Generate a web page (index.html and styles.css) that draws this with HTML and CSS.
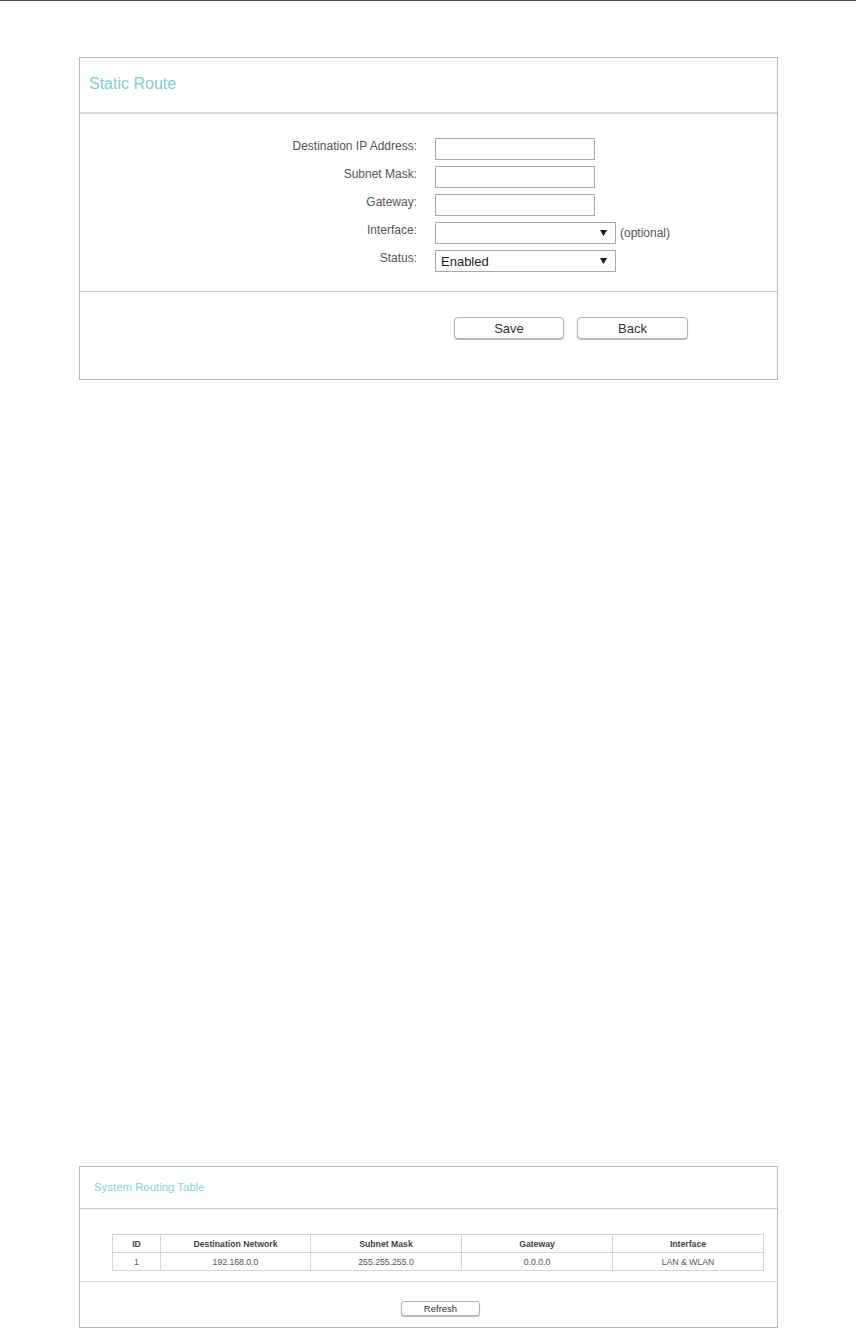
FILE: index.html
```html
<!DOCTYPE html>
<html lang="en">
<head>
<meta charset="utf-8">
<title>Static Route</title>
<link rel="stylesheet" href="styles.css">
</head>
<body>
<div class="topbar"></div>

<section class="panel panel-static">
  <div class="panel-head">
    <h2 class="title">Static Route</h2>
  </div>
  <div class="form">
    <label class="lbl">Destination IP Address:</label>
    <div class="field"><input class="txt" type="text"></div>

    <label class="lbl">Subnet Mask:</label>
    <div class="field"><input class="txt" type="text"></div>

    <label class="lbl">Gateway:</label>
    <div class="field"><input class="txt" type="text"></div>

    <label class="lbl">Interface:</label>
    <div class="field">
      <div class="select"><span class="select-val"></span><svg class="arrow" width="7" height="6" viewBox="0 0 7 6"><path d="M0 0H7L3.5 6Z" fill="#1a1a1a"/></svg></div>
      <span class="hint">(optional)</span>
    </div>

    <label class="lbl">Status:</label>
    <div class="field">
      <div class="select"><span class="select-val">Enabled</span><svg class="arrow" width="7" height="6" viewBox="0 0 7 6"><path d="M0 0H7L3.5 6Z" fill="#1a1a1a"/></svg></div>
    </div>
  </div>
  <div class="actions">
    <button class="btn btn-save" type="button">Save</button>
    <button class="btn btn-back" type="button">Back</button>
  </div>
</section>

<section class="panel panel-table">
  <div class="panel-head small">
    <h2 class="title small">System Routing Table</h2>
  </div>
  <div class="table-wrap">
    <table class="rt">
      <colgroup>
        <col class="c-id"><col class="c-net"><col class="c-mask"><col class="c-gw"><col class="c-if">
      </colgroup>
      <thead>
        <tr><th>ID</th><th>Destination Network</th><th>Subnet Mask</th><th>Gateway</th><th>Interface</th></tr>
      </thead>
      <tbody>
        <tr><td>1</td><td>192.168.0.0</td><td>255.255.255.0</td><td>0.0.0.0</td><td>LAN &amp; WLAN</td></tr>
      </tbody>
    </table>
  </div>
  <div class="table-actions">
    <button class="btn btn-small" type="button">Refresh</button>
  </div>
</section>
</body>
</html>
```
FILE: styles.css
```css
html, body {
  margin: 0;
  padding: 0;
  background: #ffffff;
}

body {
  font-family: "Liberation Sans", Arial, sans-serif;
  color: #555555;
}

.topbar {
  height: 1px;
  background: #4b4e54;
}

.panel {
  box-sizing: border-box;
  width: 699px;
  margin-left: 79px;
  border: 1px solid #b9b9b9;
  background: #ffffff;
}

.panel-static {
  margin-top: 56px;
}

.panel-table {
  margin-top: 786px;
}

.panel-head {
  height: 56px;
  box-sizing: border-box;
  padding: 17px 0 0 9px;
  border-bottom: 2px solid #dddddd;
}

.panel-head.small {
  height: 42px;
  padding: 13px 0 0 14px;
  border-bottom: 1px solid #c9c9c9;
}

.title {
  margin: 0;
  font-size: 16px;
  line-height: 18px;
  font-weight: normal;
  color: #7ccfd5;
}

.title.small {
  font-size: 11.4px;
  line-height: 14px;
  color: #82d2d6;
}

.form {
  display: grid;
  grid-template-columns: 338px auto;
  column-gap: 17px;
  row-gap: 6px;
  padding: 24px 0 19px 0;
}

.lbl {
  text-align: right;
  font-size: 12px;
  line-height: 17px;
  color: #555555;
  padding-right: 1px;
}

.field {
  display: flex;
  align-items: center;
  height: 22px;
}

.txt {
  box-sizing: border-box;
  width: 160px;
  height: 22px;
  margin: 0;
  padding: 0 5px;
  border: 1px solid #a9a9a9;
  border-radius: 0;
  background: #ffffff;
  font-family: inherit;
  font-size: 13px;
  outline: none;
}

.select {
  box-sizing: border-box;
  width: 181px;
  height: 22px;
  border: 1px solid #a9a9a9;
  display: flex;
  align-items: center;
  justify-content: space-between;
  padding: 0 8px 0 5px;
  font-size: 13px;
  color: #1e1e1e;
  background: #ffffff;
}

.arrow {
  display: block;
  flex: none;
}

.hint {
  margin-left: 4px;
  font-size: 12px;
  color: #555555;
}

.actions {
  border-top: 1px solid #cccccc;
  padding: 25px 0 40px 374px;
  display: flex;
  gap: 13px;
}

.btn {
  box-sizing: border-box;
  height: 22px;
  margin: 0;
  padding: 0;
  border: 1px solid #b3b3b3;
  border-radius: 4px;
  background: #ffffff;
  box-shadow: 0 1px 1px rgba(0, 0, 0, 0.28);
  font-family: inherit;
  font-size: 13px;
  color: #333333;
  cursor: pointer;
}

.btn-save {
  width: 110px;
}

.btn-back {
  width: 111px;
}

.table-wrap {
  padding: 25px 0 10px 32px;
  border-bottom: 1px solid #dddddd;
}

.rt {
  border-collapse: collapse;
  table-layout: fixed;
  width: 651px;
  font-size: 8.7px;
}

.rt .c-id { width: 48px; }
.rt .c-net { width: 150px; }
.rt .c-mask { width: 151px; }
.rt .c-gw { width: 151px; }
.rt .c-if { width: 151px; }

.rt th,
.rt td {
  border: 1px solid #d6d6d6;
  text-align: center;
  padding: 0;
  white-space: nowrap;
}

.rt th {
  height: 17px;
  font-weight: bold;
  color: #444444;
}

.rt td {
  height: 17px;
  color: #555555;
}

.table-actions {
  padding: 19px 0 11px 321px;
  display: flex;
}

.btn-small {
  width: 79px;
  height: 15px;
  font-size: 9.5px;
  border-radius: 3px;
  line-height: 13px;
}
```
